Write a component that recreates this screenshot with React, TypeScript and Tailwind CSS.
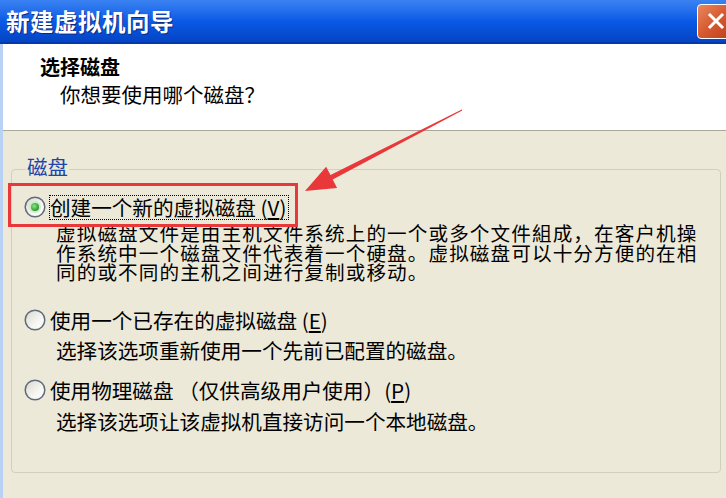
import React from "react";

function Radio({ checked = false }: { checked?: boolean }) {
  return (
    <svg width="22" height="22" viewBox="0 0 22 22" className="shrink-0">
      <defs>
        <linearGradient id="radioFill" x1="0" y1="0" x2="1" y2="1">
          <stop offset="0" stopColor="#d8d6cc" />
          <stop offset="0.6" stopColor="#f6f6f2" />
          <stop offset="1" stopColor="#ffffff" />
        </linearGradient>
        <radialGradient id="radioDot" cx="0.4" cy="0.4" r="0.6">
          <stop offset="0" stopColor="#8ee68e" />
          <stop offset="1" stopColor="#2a962a" />
        </radialGradient>
      </defs>
      <circle cx="11" cy="11" r="9.8" fill="url(#radioFill)" stroke="#5f6b7c" strokeWidth="1.5" />
      {checked && (
        <>
          <circle cx="11" cy="11" r="6" fill="#c9eec4" />
          <circle cx="11" cy="11" r="4" fill="url(#radioDot)" />
        </>
      )}
    </svg>
  );
}

function Option({
  label,
  hotkey,
  checked,
  focused,
}: {
  label: string;
  hotkey: string;
  checked?: boolean;
  focused?: boolean;
}) {
  return (
    <div className="flex items-center h-[26px]">
      <Radio checked={checked} />
      <span
        className={
          focused
            ? "ml-[3px] pr-[2px] border border-dotted border-black leading-[23px]"
            : "ml-[4px] leading-[24px]"
        }
      >
        {label}(<u>{hotkey}</u>)
      </span>
    </div>
  );
}

export default function App() {
  return (
    <div className="relative w-[726px] h-[498px] overflow-hidden bg-[#ece9d8] text-black font-['Noto_Sans_CJK_SC',sans-serif]">
      {/* title bar */}
      <div className="h-[44px] flex items-center bg-gradient-to-b from-[#3a82f2] via-[#0a5ae6] to-[#0444c4] border-b-2 border-[#0338ac] overflow-hidden">
        <div className="flex-1 pl-[6px] text-white font-bold text-[23.5px] leading-[30px] tracking-[0.5px] [text-shadow:1px_1px_0_#0a2a80]">
          新建虚拟机向导
        </div>
        <div className="shrink-0 mr-[-8px] w-[37px] h-[35px] rounded-[4px] border border-white bg-gradient-to-br from-[#e8875f] via-[#d6582e] to-[#b8401c] flex items-center justify-center">
          <svg width="18" height="18" viewBox="0 0 18 18">
            <path d="M3 3 L15 15 M15 3 L3 15" stroke="#fff" strokeWidth="3" strokeLinecap="square" />
          </svg>
        </div>
      </div>

      <div className="border-l-[3px] border-[#b9d1f5] h-[454px] flex flex-col">
        {/* header */}
        <div className="h-[87px] bg-white border-b border-[#aca899] pl-[37px] pt-[10px]">
          <div className="text-[20px] font-bold leading-[26px]">选择磁盘</div>
          <div className="text-[20.5px] leading-[26px] pl-[20px] mt-[1px]">你想要使用哪个磁盘？</div>
        </div>

        {/* body */}
        <div className="pt-[38px] pl-[8px]">
          <div className="relative w-[710px] h-[304px] border border-[#d0d0bf] rounded-[4px] pl-[12px] pt-[24px] text-[20.6px]">
            <div className="absolute left-[14px] top-[-16px] bg-[#ece9d8] px-[1px] leading-[24px] text-[20.5px] text-[#1d44a8]">
              磁盘
            </div>

            <Option label="创建一个新的虚拟磁盘 " hotkey="V" checked focused />
            <div className="ml-[32px] mt-[3px] text-[19.6px] tracking-[1.1px] leading-[19.6px]">
              <div>虚拟磁盘文件是由主机文件系统上的一个或多个文件組成，在客户机操</div>
              <div>作系统中一个磁盘文件代表着一个硬盘。虚拟磁盘可以十分方便的在相</div>
              <div>同的或不同的主机之间进行复制或移动。</div>
            </div>

            <div className="mt-[25px]">
              <Option label="使用一个已存在的虚拟磁盘 " hotkey="E" />
            </div>
            <div className="ml-[32px] mt-[7px] leading-[20px]">选择该选项重新使用一个先前已配置的磁盘。</div>

            <div className="mt-[17px]">
              <Option label="使用物理磁盘 （仅供高级用户使用）" hotkey="P" />
            </div>
            <div className="ml-[32px] mt-[8px] leading-[20px]">选择该选项让该虚拟机直接访问一个本地磁盘。</div>
          </div>
        </div>
      </div>

      {/* annotation: red box + arrow */}
      <div className="absolute left-[8px] top-[183px] w-[290px] h-[44px] border-[3px] border-[#e8383a]" />
      <svg className="absolute inset-0 pointer-events-none" width="726" height="498" viewBox="0 0 726 498">
        <polygon
          points="305,191 337.1,188 332.7,179.5 462.2,110.4 461.8,109.6 330.5,175.1 326.1,166.7"
          fill="#e8383a"
        />
      </svg>
    </div>
  );
}
